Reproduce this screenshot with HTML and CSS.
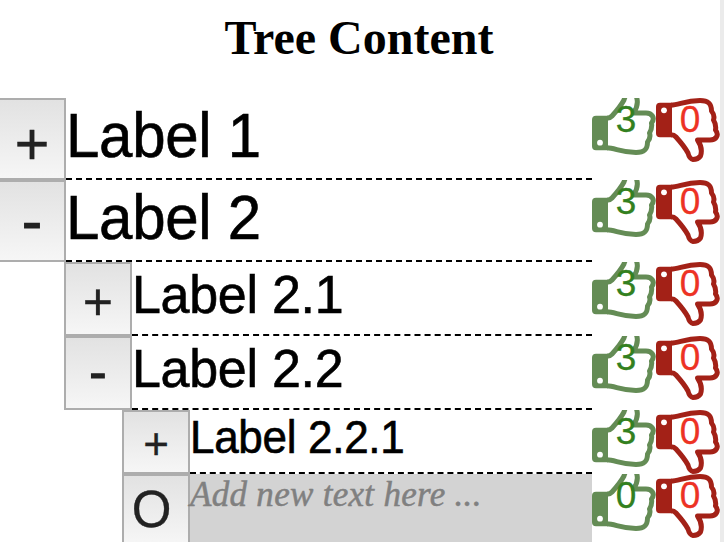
FILE: index.html
```html
<!DOCTYPE html>
<html lang="en">
<head>
<meta charset="utf-8">
<title>Tree Content</title>
<link rel="stylesheet" href="styles.css">
</head>
<body>
<svg class="defs" aria-hidden="true">
<symbol id="thumb" viewBox="0 0 64 64">
<path fill="currentColor" d="M4 4.700h12v34.600H4a4 4 0 0 1-4-4V8.700a4 4 0 0 1 4-4z"/>
<circle cx="8" cy="12.300" r="2.900" fill="#fff"/>
<path fill="none" stroke="currentColor" stroke-width="5" stroke-linejoin="round" d="M15 7.200C23 7 29 2.700 44 2.500C52 2.500 55.500 5 55.500 13C58 16 58.500 19 57.500 22C60 26 60 29 59.500 32C63.500 37 60 42 54 42H41.500C45 47 46.500 52 44.500 58Q42 61.500 37 61.500Q33.500 61 32 55C28.500 48.500 24.500 44 20 39Q18 36.800 15 36.800"/>
</symbol>
</svg>
<main class="page">
<h1>Tree Content</h1>
<div class="row l1"><button>+</button><div class="label"><span>Label 1</span></div><div class="vote up"><svg><use href="#thumb"/></svg><span>3</span></div><div class="vote down"><svg><use href="#thumb"/></svg><span>0</span></div></div>
<div class="row l1"><button class="minus">-</button><div class="label"><span>Label 2</span></div><div class="vote up"><svg><use href="#thumb"/></svg><span>3</span></div><div class="vote down"><svg><use href="#thumb"/></svg><span>0</span></div></div>
<div class="row l2"><button>+</button><div class="label"><span>Label 2.1</span></div><div class="vote up"><svg><use href="#thumb"/></svg><span>3</span></div><div class="vote down"><svg><use href="#thumb"/></svg><span>0</span></div></div>
<div class="row l2"><button class="minus">-</button><div class="label"><span>Label 2.2</span></div><div class="vote up"><svg><use href="#thumb"/></svg><span>3</span></div><div class="vote down"><svg><use href="#thumb"/></svg><span>0</span></div></div>
<div class="row l3"><button>+</button><div class="label"><span>Label 2.2.1</span></div><div class="vote up"><svg><use href="#thumb"/></svg><span>3</span></div><div class="vote down"><svg><use href="#thumb"/></svg><span>0</span></div></div>
<div class="row l3 new"><button>O</button><div class="label">Add new text here ...</div><div class="vote up"><svg><use href="#thumb"/></svg><span>0</span></div><div class="vote down"><svg><use href="#thumb"/></svg><span>0</span></div></div>
</main>
</body>
</html>
```
FILE: styles.css
```css
* { box-sizing: border-box; }
body { margin: 0; height: 542px; overflow: hidden; background: #ebebeb; }
.defs { display: none; }
.page { width: 720px; height: 542px; overflow: hidden; background: #fff; }
h1 { margin: 0; height: 98px; padding: 10px 2px 0 0; font: bold 48px/56px "Liberation Serif", serif; text-align: center; }
.row { display: flex; font-family: "Liberation Sans", sans-serif; }
.l1 { height: 82px; margin-left: -2px; font-size: 60px; line-height: 75px; }
.l2 { height: 74px; margin-left: 64px; font-size: 52px; line-height: 64px; }
.l3 { height: 64px; margin-left: 122px; font-size: 44px; line-height: 53px; }
button { flex: none; width: 68px; padding: 9px 0 0; border: 2px solid #adadad; background: linear-gradient(#e2e2e2, #f6f6f6); color: #222; font-family: inherit; font-size: 1em; line-height: 60px; -webkit-text-stroke: .3px #222; }
.l2 button { padding-top: 6px; }
.l3 button { padding-top: 4px; line-height: 50px; }
.row .minus { padding: 0; -webkit-text-stroke-width: 1.2px; }
.l2 .minus { padding-bottom: 3px; }
.label { flex: 1; border-bottom: 2px dashed #000; white-space: nowrap; letter-spacing: -.3px; }
.label span { display: inline-block; transform: scaleY(1.045); -webkit-text-stroke: .6px #000; }
.new { height: 72px; }
.new button { padding: 0 9px 0 0; font-size: 51px; }
.new .label { border: 0; background: #d3d3d3; color: #808080; font: italic 35px/42px "Liberation Serif", serif; letter-spacing: .3px; -webkit-text-stroke: .5px #808080; }
.vote { position: relative; flex: none; width: 64px; height: 64px; overflow: hidden; font-size: 37px; line-height: 43px; text-align: center; }
.vote svg { position: absolute; left: 0; top: 0; width: 64px; height: 64px; }
.vote span { position: relative; left: 2px; -webkit-text-stroke: .3px; }
.up { color: #648c55; }
.up svg { top: -7px; transform: scaleY(-1); }
.up span { color: #338020; }
.down { color: #a32117; }
.down span { color: #ed3224; }
```
